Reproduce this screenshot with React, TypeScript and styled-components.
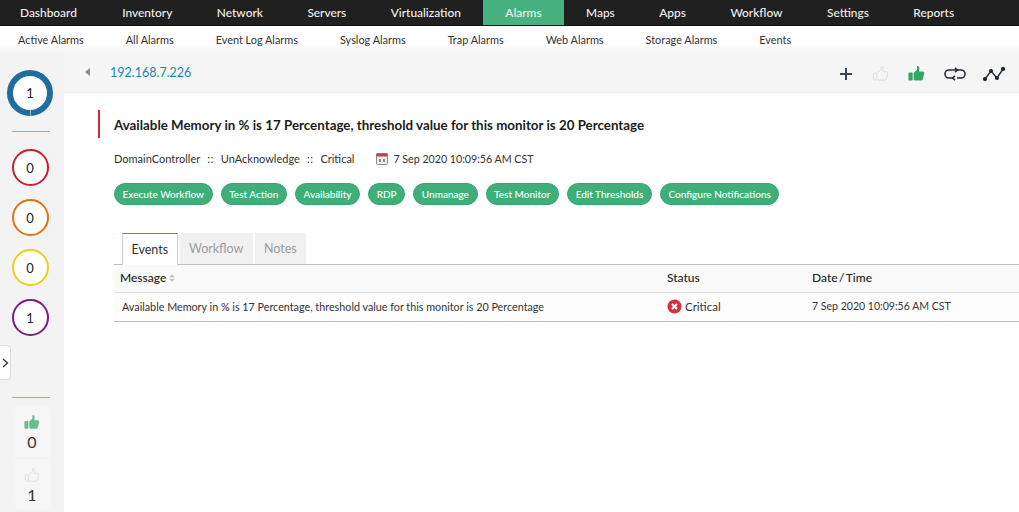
import React from "react"
import styled, { createGlobalStyle } from "styled-components"

const GlobalStyle = createGlobalStyle`
  html, body {
    margin: 0;
    padding: 0;
    background: #fff;
  }
  body {
    font-family: Lato, "Open Sans", "Liberation Sans", sans-serif;
    color: #333;
    overflow: hidden;
  }
`

const topItems = ["Dashboard", "Inventory", "Network", "Servers", "Virtualization", "Alarms", "Maps", "Apps", "Workflow", "Settings", "Reports"]
const subItems = ["Active Alarms", "All Alarms", "Event Log Alarms", "Syslog Alarms", "Trap Alarms", "Web Alarms", "Storage Alarms", "Events"]
const actions = ["Execute Workflow", "Test Action", "Availability", "RDP", "Unmanage", "Test Monitor", "Edit Thresholds", "Configure Notifications"]
const severities = [
  { color: "#c9202f", count: 0 },
  { color: "#e0731a", count: 0 },
  { color: "#e6d21e", count: 0 },
  { color: "#7d1a7e", count: 1 },
]

const ThumbUp = ({ size = 18, color = "#2fa866" }: { size?: number; color?: string }) => (
  <svg width={size} height={size} viewBox="0 0 18 18">
    <rect x="0.5" y="8" width="4.5" height="8.500" rx="1" fill={color} />
    <path d="M6 8.500 9.500 5V1.200c1.800-.4 2.800.9 2.500 2.900L11.600 7h4.200c1 0 1.600.9 1.300 1.900l-1.500 6.400c-.2.800-.8 1.200-1.500 1.200H8c-1 0-2-.4-2-1.400Z" fill={color} />
  </svg>
)

const ThumbOutline = ({ size = 18 }: { size?: number }) => (
  <svg width={size} height={size} viewBox="0 0 18 18" fill="none" stroke="#dcdcdc" strokeWidth="1">
    <rect x="1.500" y="8.500" width="3.500" height="7.500" rx="1" />
    <path d="M5 9 9.500 5V1.800c1.600-.4 2.500.9 2.200 2.600L11.300 7h4c1 0 1.600.9 1.300 1.900l-1.400 6c-.2.700-.8 1.100-1.500 1.100H7.500C6.500 16 5 15.600 5 15" />
  </svg>
)

export default function App() {
  return (
    <Page>
      <GlobalStyle />
      <TopNav>
        {topItems.map((item) => (
          <TopItem key={item} $active={item === "Alarms"}>{item}</TopItem>
        ))}
      </TopNav>
      <SubNav>
        {subItems.map((item) => (
          <SubItem key={item}>{item}</SubItem>
        ))}
      </SubNav>
      <Body>
        <Sidebar>
          <TotalRing>1</TotalRing>
          <Rule />
          <RingList>
            {severities.map((s, i) => (
              <Ring key={i} $color={s.color}>{s.count}</Ring>
            ))}
          </RingList>
          <Rule $low />
          <AckCard>
            <AckCell>
              <ThumbUp size={16} color="#66bd90" />
              <AckCount>0</AckCount>
            </AckCell>
            <AckCell>
              <ThumbOutline size={16} />
              <AckCount>1</AckCount>
            </AckCell>
          </AckCard>
          <Handle>
            <svg width="7" height="10" viewBox="0 0 7 10" fill="none" stroke="#333" strokeWidth="1.300">
              <path d="M1 1l4.500 4L1 9" />
            </svg>
          </Handle>
        </Sidebar>
        <Main>
          <Header>
            <BackArrow />
            <HostLink>192.168.7.226</HostLink>
            <Tools>
              <svg width="14" height="14" viewBox="0 0 14 14" stroke="#3a4654" strokeWidth="2">
                <path d="M7 1v12M1 7h12" />
              </svg>
              <ThumbOutline size={17} />
              <ThumbUp size={17} />
              <LoopIcon width="24" height="14" viewBox="0 0 24 14" fill="none" stroke="#222b36" strokeWidth="1.600">
                <path d="M11 3H6a4 4 0 0 0 0 8h4M14 11h4a4 4 0 0 0 0-8H9" />
                <path d="M12 .8 14.500 3 12 5.200M12 8.800 9.500 11l2.500 2.200" />
              </LoopIcon>
              <svg width="22" height="14" viewBox="0 0 22 14" stroke="#222b36" strokeWidth="1.400" fill="#222b36">
                <path d="M2 12 8 4l6 7 6-9" fill="none" />
                <circle cx="2" cy="12" r="1.400" />
                <circle cx="8" cy="4" r="1.400" />
                <circle cx="14" cy="11" r="1.400" />
                <circle cx="20" cy="2" r="1.400" />
              </svg>
            </Tools>
          </Header>
          <Content>
            <Title>Available Memory in % is 17 Percentage, threshold value for this monitor is 20 Percentage</Title>
            <Meta>
              <span>DomainController</span>
              <MetaSep>::</MetaSep>
              <span>UnAcknowledge</span>
              <MetaSep>::</MetaSep>
              <span>Critical</span>
              <MetaDate>
                <svg width="12" height="13" viewBox="0 0 12 13">
                  <rect x=".5" y="1.500" width="11" height="11" rx="1" fill="#f2eeee" stroke="#8a8a8a" />
                  <rect x=".5" y="1.500" width="11" height="3" fill="#b8454e" />
                  <path d="M3 7h2v3H3zM7 7h2v3H7z" fill="#8a8a8a" />
                </svg>
                7 Sep 2020 10:09:56 AM CST
              </MetaDate>
            </Meta>
            <Actions>
              {actions.map((a) => (
                <Pill key={a}>{a}</Pill>
              ))}
            </Actions>
            <Tabs>
              <Tab $active>Events</Tab>
              <Tab>Workflow</Tab>
              <Tab>Notes</Tab>
            </Tabs>
            <TableHead>
              <MessageCol>
                Message
                <SortIcon width="6" height="8" viewBox="0 0 7 9" fill="#c4c4c4">
                  <path d="M3.500 0 7 3.500H0zM0 5.500h7L3.500 9z" />
                </SortIcon>
              </MessageCol>
              <StatusCol>Status</StatusCol>
              <DateCol>Date / Time</DateCol>
            </TableHead>
            <TableRow>
              <MessageCell>Available Memory in % is 17 Percentage, threshold value for this monitor is 20 Percentage</MessageCell>
              <StatusCell>
                <svg width="15" height="15" viewBox="0 0 15 15">
                  <circle cx="7.500" cy="7.500" r="7" fill="#d8303f" />
                  <path d="M5 5l5 5M10 5l-5 5" stroke="#fff" strokeWidth="2" />
                </svg>
                Critical
              </StatusCell>
              <DateCell>7 Sep 2020 10:09:56 AM CST</DateCell>
            </TableRow>
          </Content>
        </Main>
      </Body>
    </Page>
  )
}

const Page = styled.div`
  width: 1019px;
  height: 512px;
  display: flex;
  flex-direction: column;
  overflow: hidden;
`

const TopNav = styled.nav`
  height: 26px;
  flex: none;
  display: flex;
  box-sizing: border-box;
  background: #202020;
  border-bottom: 1px solid #111;
`

const TopItem = styled.div<{ $active?: boolean }>`
  padding: 0 22.26px;
  line-height: 25px;
  font-size: 11.900px;
  font-weight: 500;
  color: #f0f0f0;
  white-space: nowrap;
  background: ${(p) => (p.$active ? "#47b17f" : "transparent")};
  &:first-child {
    padding-left: 20px;
    padding-right: 23px;
  }
`

const SubNav = styled.nav`
  height: 26px;
  flex: none;
  display: flex;
  gap: 42px;
  padding-left: 18px;
  box-sizing: border-box;
  align-items: center;
  background: linear-gradient(#ffffff 70%, #f5f5f5);
`

const SubItem = styled.div`
  font-size: 10.900px;
  color: #333;
  white-space: nowrap;
`

const Body = styled.div`
  flex: 1;
  display: flex;
  min-height: 0;
`

const Sidebar = styled.aside`
  position: relative;
  width: 64px;
  flex: none;
  background: #f3f3f3;
  display: flex;
  flex-direction: column;
  align-items: center;
  padding-top: 18px;
  box-sizing: border-box;
`

const TotalRing = styled.div`
  position: relative;
  width: 46px;
  height: 46px;
  box-sizing: border-box;
  border: 6px solid #1f6d9f;
  border-radius: 50%;
  background: #fff;
  margin-left: -4px;
  display: flex;
  align-items: center;
  justify-content: center;
  font-size: 13px;
  color: #222;
  &::after {
    content: "";
    position: absolute;
    left: 16.500px;
    bottom: -6px;
    width: 1px;
    height: 6px;
    background: #8fb9d4;
  }
`

const Rule = styled.div<{ $low?: boolean }>`
  width: 38px;
  height: 1px;
  margin: ${(p) => (p.$low ? "61px 0 0 -2px" : "15px 0 0 -2px")};
  background: #7db6d8;
`

const RingList = styled.div`
  display: flex;
  flex-direction: column;
  gap: 13px;
  margin: 17px 0 0 -4px;
`

const Ring = styled.div<{ $color: string }>`
  width: 37px;
  height: 37px;
  box-sizing: border-box;
  border: 2px solid ${(p) => p.$color};
  border-radius: 50%;
  background: #fff;
  display: flex;
  align-items: center;
  justify-content: center;
  font-size: 13px;
  color: #222;
`

const AckCard = styled.div`
  width: 37px;
  margin-top: 8px;
  background: #f6f6f6;
  border-radius: 8px;
  display: flex;
  flex-direction: column;
`

const AckCell = styled.div`
  height: 52px;
  display: flex;
  flex-direction: column;
  align-items: center;
  padding-top: 8px;
  box-sizing: border-box;
  & + & {
    border-top: 1px solid #f1f1f1;
  }
`

const AckCount = styled.div`
  font-size: 16px;
  line-height: 20px;
  margin-top: 2px;
  color: #333;
`

const Handle = styled.div`
  position: absolute;
  left: -1px;
  top: 293px;
  width: 10px;
  height: 33px;
  background: #fff;
  border: 1px solid #dddddd;
  border-radius: 0 4px 4px 0;
  display: flex;
  align-items: center;
  justify-content: center;
`

const Main = styled.main`
  flex: 1;
  display: flex;
  flex-direction: column;
  min-width: 0;
`

const Header = styled.header`
  height: 41px;
  flex: none;
  display: flex;
  align-items: center;
  padding-left: 21px;
  background: #f5f5f5;
  box-sizing: border-box;
  border-bottom: 1px solid #eeeeee;
`

const BackArrow = styled.div`
  width: 0;
  height: 0;
  border-style: solid;
  border-width: 4px 5px 4px 0;
  border-color: transparent #8c8c8c transparent transparent;
`

const HostLink = styled.a`
  margin-left: 20px;
  padding-top: 1px;
  font-size: 12.500px;
  color: #1c86bb;
`

const Tools = styled.div`
  margin-left: auto;
  margin-right: 14px;
  display: flex;
  align-items: center;
  gap: 19px;
  padding-top: 3px;
`

const LoopIcon = styled.svg`
  margin: 0 -3px 0 -1px;
`

const Content = styled.div`
  flex: 1;
  background: #fff;
  padding: 17px 0 0 50px;
`

const Title = styled.h1`
  margin: 0 0 0 -16px;
  padding-left: 14px;
  border-left: 2px solid #d3293d;
  height: 28px;
  line-height: 30px;
  font-size: 13.350px;
  font-weight: 700;
  color: #1c1c1c;
  white-space: nowrap;
`

const Meta = styled.div`
  display: flex;
  align-items: center;
  gap: 7px;
  margin-top: 11px;
  height: 18px;
  font-size: 11px;
  color: #333;
  white-space: nowrap;
`

const MetaSep = styled.span`
  letter-spacing: 0.5px;
`

const MetaDate = styled.span`
  display: inline-flex;
  align-items: center;
  gap: 5px;
  margin-left: 15px;
  font-size: 10.650px;
`

const Actions = styled.div`
  display: flex;
  gap: 8px;
  margin-top: 16px;
`

const Pill = styled.button`
  height: 22px;
  padding: 0 7.600px;
  border: 1px solid #39a572;
  border-radius: 11px;
  background: #3eaf78;
  color: #fff;
  font-family: inherit;
  font-size: 10px;
  font-weight: 500;
  white-space: nowrap;
`

const Tabs = styled.div`
  display: flex;
  gap: 2px;
  margin-top: 28px;
  padding-left: 8px;
  border-bottom: 1px solid #bdbdbd;
  height: 31px;
`

const Tab = styled.div<{ $active?: boolean }>`
  box-sizing: border-box;
  padding: 0 ${(p) => (p.$active ? "8.500px" : "9.300px")};
  line-height: 31px;
  font-size: 12.500px;
  color: ${(p) => (p.$active ? "#333" : "#9d9d9d")};
  background: ${(p) => (p.$active ? "#fff" : "#f1f1f1")};
  border-top: ${(p) => (p.$active ? "1px solid #2fa866" : "none")};
  border-left: ${(p) => (p.$active ? "1px solid #cfcfcf" : "none")};
  border-right: ${(p) => (p.$active ? "1px solid #cfcfcf" : "none")};
  margin-bottom: ${(p) => (p.$active ? "-1px" : "0")};
  height: ${(p) => (p.$active ? "32px" : "31px")};
`

const TableHead = styled.div`
  height: 25px;
  padding-bottom: 2px;
  display: grid;
  grid-template-columns: 553px 145px 1fr;
  align-items: center;
  background: #fafafa;
  border-bottom: 1px solid #e3e3e3;
  font-size: 12px;
  font-weight: 500;
  color: #222;
`

const TableRow = styled.div`
  height: 26px;
  padding-bottom: 2px;
  display: grid;
  grid-template-columns: 553px 145px 1fr;
  align-items: center;
  background: #fdfdfd;
  border-bottom: 1px solid #bdbdbd;
  color: #333;
`

const MessageCol = styled.div`
  padding-left: 6px;
  display: flex;
  align-items: center;
  gap: 3px;
`

const SortIcon = styled.svg`
  flex: none;
`

const StatusCol = styled.div``

const DateCol = styled.div`
  word-spacing: -1.500px;
`

const MessageCell = styled.div`
  padding-left: 8px;
  font-size: 10.780px;
  white-space: nowrap;
`

const StatusCell = styled.div`
  display: flex;
  align-items: center;
  gap: 3px;
  font-size: 11.500px;
`

const DateCell = styled.div`
  font-size: 10.550px;
  white-space: nowrap;
`
